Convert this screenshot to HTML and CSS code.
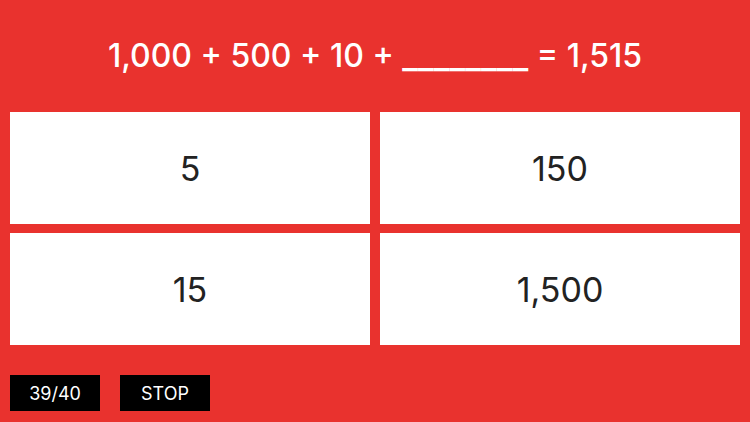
FILE: index.html
```html
<!DOCTYPE html>
<html>
<head>
<meta charset="utf-8">
<link rel="stylesheet" href="styles.css">
</head>
<body>
<div class="app">
  <div class="question">1,000 + 500 + 10 + <span class="blank">________</span> = 1,515</div>
  <div class="answers">
    <div class="answer">5</div>
    <div class="answer">150</div>
    <div class="answer">15</div>
    <div class="answer">1,500</div>
  </div>
  <div class="footer">
    <div class="btn">39/40</div>
    <div class="btn">STOP</div>
  </div>
</div>
</body>
</html>
```
FILE: styles.css
```css
html, body {
  margin: 0;
  padding: 0;
}
body {
  background: #e9322e;
  width: 750px;
  height: 422px;
  overflow: hidden;
  font-family: Inter, "Liberation Sans", sans-serif;
}
.app {
  display: flex;
  flex-direction: column;
  padding: 0 10px;
}
.question {
  height: 112px;
  display: flex;
  align-items: center;
  justify-content: center;
  white-space: pre;
  color: #fff;
  font-size: 32px;
  font-weight: 500;
  padding-bottom: 1px;
  box-sizing: border-box;
}
.blank {
  font-size: 34px;
}
.answers {
  display: grid;
  grid-template-columns: 360px 360px;
  grid-template-rows: 112px 112px;
  column-gap: 10px;
  row-gap: 9px;
}
.answer {
  background: #fff;
  display: flex;
  align-items: center;
  justify-content: center;
  font-size: 34px;
  color: #222;
}
.footer {
  display: flex;
  gap: 20px;
  margin-top: 30px;
}
.btn {
  width: 90px;
  height: 36px;
  background: #000;
  color: #fff;
  font-size: 18px;
  display: flex;
  align-items: center;
  justify-content: center;
}
```
